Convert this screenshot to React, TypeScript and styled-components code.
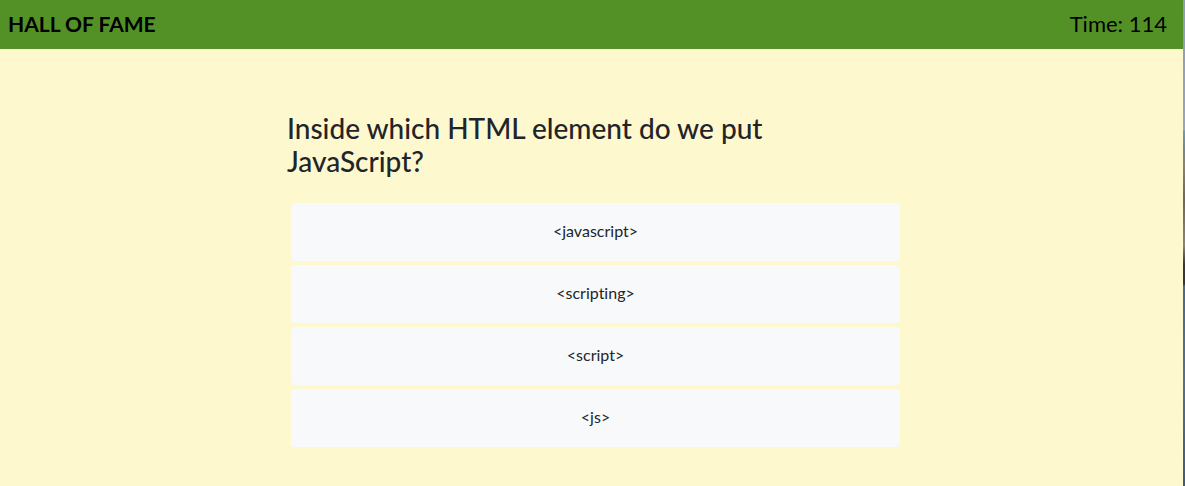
import React from "react";
import styled, { createGlobalStyle } from "styled-components";

const GlobalStyle = createGlobalStyle`
  *, *::before, *::after { box-sizing: border-box; }
  body {
    margin: 0;
    background: #fef8ce;
    color: #212529;
    font-family: "Trebuchet MS", Lato, "Open Sans", sans-serif;
    font-size: 16px;
    line-height: 24px;
    font-variant-ligatures: none;
  }
`;

const Page = styled.div`
  display: flex;
  min-height: 100vh;
`;

const Content = styled.div`
  flex: 1;
  min-width: 0;
`;

const Backdrop = styled.div`
  width: 2px;
  background: linear-gradient(
    #8e9bb8 0,
    #98a5c0 130px,
    #6f9ab5 131px,
    #6f8794 150px,
    #8a8272 165px,
    #6d665c 200px,
    #8b8375 245px,
    #35343a 265px,
    #35343a 284px,
    #48688c 286px,
    #54708f 380px,
    #3f5a7a 100%
  );
`;

const Header = styled.header`
  display: flex;
  align-items: center;
  justify-content: space-between;
  padding: 7px 16px 9px 8px;
  background: #539127;
  color: #000;
  font-size: 22px;
  line-height: 33px;
`;

const FameLink = styled.a`
  color: inherit;
  font-size: 21px;
  font-weight: 700;
  text-decoration: none;
`;

const Quiz = styled.main`
  max-width: 625px;
  margin: 0 auto;
  padding: 63px 0 32px 8px;
`;

const Question = styled.h1`
  max-width: 560px;
  margin: 0 0 25px;
  font-size: 28px;
  font-weight: 500;
  line-height: 33px;
`;

const Answers = styled.div`
  display: flex;
  flex-direction: column;
  gap: 4px;
  padding: 0 4px;
`;

const Answer = styled.button`
  padding: 16px 12px 18px;
  border: 0;
  border-radius: 4px;
  background: #f8f9fb;
  color: inherit;
  font: inherit;
  font-variant-ligatures: none;
  cursor: pointer;
`;

const answers = ["<javascript>", "<scripting>", "<script>", "<js>"];

export default function App() {
  return (
    <>
      <GlobalStyle />
      <Page>
        <Content>
          <Header>
            <FameLink href="#hall-of-fame">HALL OF FAME</FameLink>
            <span>Time: 114</span>
          </Header>
          <Quiz>
            <Question>Inside which HTML element do we put JavaScript?</Question>
            <Answers>
              {answers.map((answer) => (
                <Answer key={answer} type="button">{answer}</Answer>
              ))}
            </Answers>
          </Quiz>
        </Content>
        <Backdrop />
      </Page>
    </>
  );
}
